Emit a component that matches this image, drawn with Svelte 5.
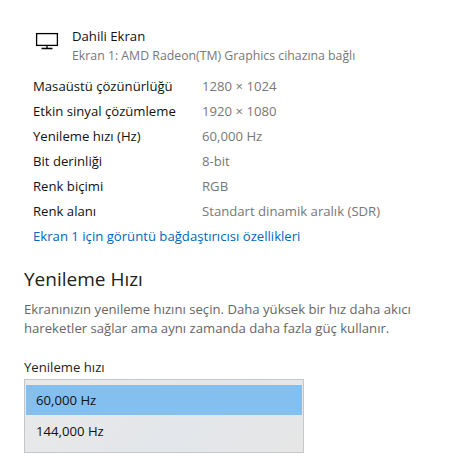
<script lang="ts">
  const specs = [
    ['Masaüstü çözünürlüğü', '1280 × 1024'],
    ['Etkin sinyal çözümleme', '1920 × 1080'],
    ['Yenileme hızı (Hz)', '60,000 Hz'],
    ['Bit derinliği', '8-bit'],
    ['Renk biçimi', 'RGB'],
    ['Renk alanı', 'Standart dinamik aralık (SDR)'],
  ];
  const rates = ['60,000 Hz', '144,000 Hz'];
  let selected = $state(0);
</script>

<div class="page">
  <div class="display">
    <svg class="display__icon" width="24" height="18" viewBox="0 0 24 18" fill="none" stroke="#000" stroke-width="1.3">
      <rect x="1.6" y="1.6" width="20.8" height="11.8" />
      <path d="M12 13.5V16.5M6.5 16.5H17.5" />
    </svg>
    <div>
      <div class="display__name">Dahili Ekran</div>
      <div class="display__sub">Ekran 1: AMD Radeon(TM) Graphics cihazına bağlı</div>
    </div>
  </div>

  <div class="specs">
    {#each specs as [label, value]}
      <div class="specs__row">
        <span class="specs__label">{label}</span>
        <span class="specs__value">{value}</span>
      </div>
    {/each}
  </div>

  <div class="link">Ekran 1 için görüntü bağdaştırıcısı özellikleri</div>

  <h2 class="title">Yenileme Hızı</h2>
  <p class="desc">Ekranınızın yenileme hızını seçin. Daha yüksek bir hız daha akıcı<br />hareketler sağlar ama aynı zamanda daha fazla güç kullanır.</p>

  <div class="field-label">Yenileme hızı</div>
  <div class="list">
    {#each rates as rate, i}
      <button class="list__item" class:list__item--on={i === selected} onclick={() => (selected = i)}>{rate}</button>
    {/each}
  </div>
</div>

<style>
  :global(body) {
    background: #fff;
  }

  .page {
    width: 455px;
    height: 466px;
    overflow: hidden;
    box-sizing: border-box;
    padding: 27px 0 0 24px;
    font-family: "Open Sans", "Noto Sans", sans-serif;
    font-size: 13.15px;
    color: #111;
  }

  .display {
    display: flex;
    padding-left: 11px;
    gap: 13px;
  }

  .display__icon {
    margin-top: 5px;
  }

  .display__name {
    line-height: 18px;
  }

  .display__sub {
    margin-top: 2px;
    line-height: 18px;
    font-size: 12.3px;
    color: #777;
  }

  .specs {
    margin-top: 9px;
    padding-left: 9px;
  }

  .specs__row {
    display: flex;
    height: 25px;
    line-height: 25px;
  }

  .specs__label {
    width: 169px;
  }

  .specs__value {
    color: #777;
  }

  .link {
    padding-left: 9px;
    line-height: 25px;
    color: #0067c0;
  }

  .title {
    margin: 17px 0 0;
    font-size: 19px;
    font-weight: 400;
    line-height: 26px;
    color: #222;
  }

  .desc {
    margin: 8px 0 0;
    font-size: 13.15px;
    line-height: 19px;
    color: #666;
  }

  .field-label {
    margin-top: 20px;
    line-height: 18px;
    font-size: 13.15px;
    color: #222;
  }

  .list {
    width: 280px;
    height: 74px;
    box-sizing: border-box;
    margin-top: 3px;
    padding: 5px 1px 0;
    border: 1px solid #c4c6c8;
    background: linear-gradient(135deg, #e9e9e9, #e3e6ea 60%, #e6e6e6);
  }

  .list__item {
    display: block;
    width: 100%;
    height: 30px;
    margin: 0 0 1px;
    padding: 0 0 0 10px;
    border: 0;
    background: none;
    font: inherit;
    color: #111;
    text-align: left;
  }

  .list__item--on {
    background: #83bfef;
  }
</style>
